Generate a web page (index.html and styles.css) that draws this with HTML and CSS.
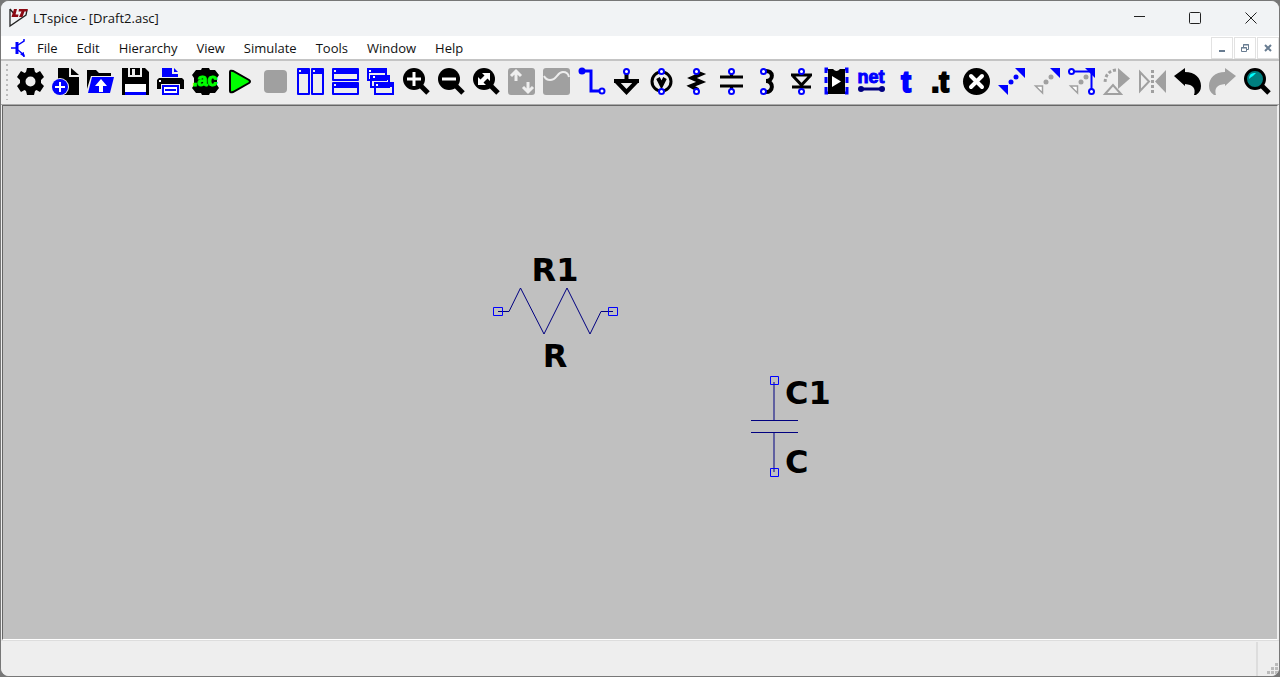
FILE: index.html
```html
<!DOCTYPE html>
<html lang="en">
<head>
<meta charset="utf-8">
<title>LTspice - [Draft2.asc]</title>
<link rel="stylesheet" href="styles.css">
</head>
<body>
<div class="window">
  <header class="titlebar">
    <svg class="logo" width="20" height="20" viewBox="0 0 20 20"><path d="M1 1V18L17 7L18 2M1 1L6 7" fill="none" stroke="#222" stroke-width="1.3"/><path d="M5 1H8L6.500 6.500H9.500L9 9H2.500ZM10 1H19L18 3.500H15.500L13.500 9H10L12.500 3.500H9.500Z" fill="#8b0a14"/></svg>
    <h1 class="title">LTspice - [Draft2.asc]</h1>
    <div class="caption-buttons">
      <button aria-label="Minimize"><svg width="14" height="14" viewBox="0 0 14 14"><path d="M2 5.500H13"/></svg></button>
      <button aria-label="Maximize"><svg width="14" height="14" viewBox="0 0 14 14"><rect x="1.500" y="1.500" width="11" height="11" rx="1"/></svg></button>
      <button aria-label="Close"><svg width="14" height="14" viewBox="0 0 14 14"><path d="M1.500 1.500L12.500 12.500M12.500 1.500L1.500 12.500"/></svg></button>
    </div>
  </header>
  <nav class="menubar">
    <svg class="doc-icon" width="16" height="20" viewBox="0 0 16 20"><path d="M0 10H6M13 1V3L7 7M7 12L13 17V19" fill="none" stroke="#00f" stroke-width="1.500"/><path d="M6 4V16" stroke="#00f" stroke-width="3"/><path d="M9 16L13 14V19Z" fill="#00f"/></svg>
    <div class="menus">
      <button>File</button><button>Edit</button><button>Hierarchy</button><button>View</button><button>Simulate</button><button>Tools</button><button>Window</button><button>Help</button>
    </div>
    <div class="doc-buttons">
      <button aria-label="Minimize document"><svg width="10" height="10" viewBox="0 0 10 10"><path d="M2 8H8" stroke-width="2"/></svg></button>
      <button aria-label="Restore document"><svg width="10" height="10" viewBox="0 0 10 10"><path d="M3.500 4V1.500H8.500V6.500H6M3 2H9M1.500 4.500H6.500V8.500H1.500ZM1 5H7"/></svg></button>
      <button aria-label="Close document"><svg width="10" height="10" viewBox="0 0 10 10"><path d="M2 2L8 8M8 2L2 8" stroke-width="2"/></svg></button>
    </div>
  </nav>
  <div class="toolbar" role="toolbar" aria-label="Tools">
    <span class="gripper"></span>
    <div class="tools">
      <button aria-label="Settings"><svg viewBox="0 0 27 27"><path fill-rule="evenodd" d="M10 0H17L18 4L19.500 5L23 3L27 9L24 12V15L27 18L23 24L19.500 22L18 23L17 27H10L9 23L7.500 22L4 24L0 18L3 15V12L0 9L4 3L7.500 5L9 4ZM13.500 8.500A5 5 0 1 0 13.500 18.500A5 5 0 1 0 13.500 8.500Z"/></svg></button>
      <button aria-label="New schematic"><svg viewBox="0 0 27 27"><path d="M6 0H17V9H27V27H6Z"/><path d="M19 0L27 7H19Z"/><circle cx="8" cy="19" r="9" fill="#eee"/><circle cx="8" cy="19" r="8" fill="#00f"/><path d="M8 14V24M3 19H13" stroke="#fff" stroke-width="2"/></svg></button>
      <button aria-label="Open"><svg viewBox="0 0 27 27"><path d="M0 2H9L12 5H24V8H4L0 21Z"/><path d="M5 9H27L23 25H1Z" fill="#00f"/><path d="M14 11L20 18H16V24H12V18H8Z" fill="#fff"/></svg></button>
      <button aria-label="Save"><svg viewBox="0 0 27 27"><path d="M0 0H6V9H20V0H23L27 4V27H0Z"/><path d="M8 0H18V7H13V1H10V7H8Z"/><path d="M3 16H24V24H3Z" fill="#fff"/><path d="M3 24H24V27H3Z" fill="#00f"/></svg></button>
      <button aria-label="Print"><svg viewBox="0 0 27 27"><path d="M5 0H15V6H21V9H5ZM17 0L21 4H17Z" fill="#00f"/><path d="M2 10H25L27 12V21H23V16H4V21H0V12Z"/><path d="M2 12H4V14H2Z" fill="#fff"/><path d="M6 18H21V26H6Z" fill="#fff" stroke="#00f" stroke-width="2"/><path d="M8 22H19" stroke="#00f" stroke-width="2"/></svg></button>
      <button aria-label="AC analysis"><svg viewBox="0 0 27 27"><path d="M10 0H17L18 2H23L27 7L25 10V17L27 20L23 25H18L17 27H10L9 25H4L0 20L2 17V10L0 7L4 2H9Z"/><text x="13" y="18" text-anchor="middle" font-size="18" fill="#0f0" stroke="#0f0">.ac</text></svg></button>
      <button aria-label="Run"><svg viewBox="0 0 27 27"><path d="M3 4Q3 2 6 3L22 12Q24 13.500 22 15L6 24Q3 25 3 23Z" fill="#0f0" stroke="#000" stroke-width="2"/></svg></button>
      <button aria-label="Stop" disabled><svg viewBox="0 0 27 27"><rect x="2" y="2" width="23" height="23" rx="4" fill="#a0a0a0"/></svg></button>
      <button aria-label="Tile vertically"><svg viewBox="0 0 27 27"><rect width="13" height="27" rx="1" fill="#00f"/><rect x="14" width="13" height="27" rx="1" fill="#00f"/><path d="M2 6H11V25H2ZM16 6H25V25H16ZM2 2H4V4H2ZM16 2H18V4H16Z" fill="#eee"/></svg></button>
      <button aria-label="Tile horizontally"><svg viewBox="0 0 27 27"><rect width="27" height="13" rx="1" fill="#00f"/><rect y="14" width="27" height="13" rx="1" fill="#00f"/><path d="M2 6H25V11H2ZM2 20H25V25H2ZM2 2H4V4H2ZM2 16H4V18H2Z" fill="#eee"/></svg></button>
      <button aria-label="Cascade"><svg viewBox="0 0 27 27"><g fill="#eee" stroke="#00f" stroke-width="2"><path d="M1 1H19V12H1ZM4 8H22V19H4ZM8 15H26V26H8Z"/></g><path d="M1 1H19V5H1ZM4 8H22V12H4ZM8 15H26V19H8Z" fill="#00f"/><path d="M2 2H4V4H2ZM6 8H8V10H6ZM9 16H11V18H9Z" fill="#fff"/></svg></button>
      <button aria-label="Zoom in"><svg viewBox="0 0 27 27"><circle cx="11" cy="11" r="11"/><path d="M17 17L25 25" stroke="#000" stroke-width="5"/><path d="M11 4V18M4 11H18" stroke="#fff" stroke-width="3"/></svg></button>
      <button aria-label="Zoom out"><svg viewBox="0 0 27 27"><circle cx="11" cy="11" r="11"/><path d="M17 17L25 25" stroke="#000" stroke-width="5"/><path d="M4 11H18" stroke="#fff" stroke-width="3"/></svg></button>
      <button aria-label="Zoom to fit"><svg viewBox="0 0 27 27"><circle cx="11" cy="11" r="11"/><path d="M17 17L25 25" stroke="#000" stroke-width="5"/><path d="M9 5H17V13L14.500 10.500L10.500 14.500L13 17H5V9L7.500 11.500L11.500 7.500Z" fill="#fff"/></svg></button>
      <button aria-label="Autorange" disabled><svg viewBox="0 0 27 27"><rect width="27" height="27" rx="3" fill="#a0a0a0"/><path d="M8 13V4M3 8L8 3L13 8M20 14V23M15 19L20 24L25 19" fill="none" stroke="#eee" stroke-width="3"/></svg></button>
      <button aria-label="Plot" disabled><svg viewBox="0 0 27 27"><rect width="27" height="27" rx="3" fill="#a0a0a0"/><path d="M1 8Q3 12 7 12C14 12 14 4 20 4Q25 4 26 9" fill="none" stroke="#eee" stroke-width="2"/></svg></button>
      <button aria-label="Wire"><svg viewBox="0 0 27 27"><path d="M3 3H13V23H21" fill="none" stroke="#00f" stroke-width="3"/><circle cx="4" cy="3" r="3.500" fill="#00f"/><circle cx="24" cy="23" r="2.500" fill="#fff" stroke="#00f" stroke-width="2"/></svg></button>
      <button aria-label="Ground"><svg viewBox="0 0 27 27"><path d="M13.500 5V13M1 13H26M3 13L13.500 24L24 13" fill="none" stroke="#000" stroke-width="4"/><circle class="pin" cx="13.500" cy="3.500" r="2.500"/></svg></button>
      <button aria-label="Voltage"><svg viewBox="0 0 27 27"><circle cx="13.500" cy="13.500" r="9.500" fill="none" stroke="#000" stroke-width="3"/><path d="M10 10L13.500 17L17 10" fill="none" stroke="#000" stroke-width="4"/><circle class="pin" cx="13.500" cy="3.500" r="2.500"/><circle class="pin" cx="13.500" cy="23.500" r="2.500"/></svg></button>
      <button aria-label="Resistor"><svg viewBox="0 0 27 27"><path d="M13 4L18 6L9 10L18 14L8 18L15 22" fill="none" stroke="#000" stroke-width="4"/><circle class="pin" cx="13.500" cy="3.500" r="2.500"/><circle class="pin" cx="13.500" cy="23.500" r="2.500"/></svg></button>
      <button aria-label="Capacitor"><svg viewBox="0 0 27 27"><path d="M2 9H25M2 18H25M13.500 5V9M13.500 18V23" fill="none" stroke="#000" stroke-width="3"/><circle class="pin" cx="13.500" cy="3.500" r="2.500"/><circle class="pin" cx="13.500" cy="23.500" r="2.500"/></svg></button>
      <button aria-label="Inductor"><svg viewBox="0 0 27 27"><path d="M12 3C21 2 21 13 13 13C21 13 21 25 12 24" fill="none" stroke="#000" stroke-width="4"/><circle class="pin" cx="10.500" cy="3.500" r="2.500"/><circle class="pin" cx="10.500" cy="23.500" r="2.500"/></svg></button>
      <button aria-label="Diode"><svg viewBox="0 0 27 27"><path d="M3 7H24M5 8L13.500 17L22 8M4 19H23" fill="none" stroke="#000" stroke-width="3"/><circle class="pin" cx="13.500" cy="3.500" r="2.500"/><circle class="pin" cx="13.500" cy="23.500" r="2.500"/></svg></button>
      <button aria-label="Component"><svg viewBox="0 0 27 27"><path d="M5 1H3V5M3 9V15M3 19V25H5M22 1H24V5M24 9V15M24 19V25H22" fill="none" stroke="#00f" stroke-width="3"/><path d="M5 1H10Q13.500 5 17 1H22V26H5Z"/><path d="M9 8L18 13.500L9 19Z" fill="#fff"/></svg></button>
      <button aria-label="Label net"><svg viewBox="0 0 27 27"><text x="13" y="15" text-anchor="middle" font-size="18" fill="#00f" stroke="#00f">net</text><path d="M3 21H24" stroke="#000080" stroke-width="3"/><circle cx="3" cy="21" r="3" fill="#000080"/><circle cx="24" cy="21" r="3" fill="#000080"/></svg></button>
      <button aria-label="Text"><svg viewBox="0 0 27 27"><text x="13" y="24" text-anchor="middle" font-size="29" fill="#00f" stroke="#00f" stroke-width="2">t</text></svg></button>
      <button aria-label="SPICE directive"><svg viewBox="0 0 27 27"><text x="12" y="24" text-anchor="middle" font-size="29" stroke="#000" stroke-width="2">.t</text></svg></button>
      <button aria-label="Delete"><svg viewBox="0 0 27 27"><circle cx="13.500" cy="13.500" r="13.500"/><path d="M8 8L19 19M19 8L8 19" stroke="#fff" stroke-width="4" stroke-linecap="round"/></svg></button>
      <button aria-label="Duplicate"><svg viewBox="0 0 27 27"><g fill="#00f"><path d="M17 0H27V10ZM0 17H10V27Z"/><circle cx="18" cy="9" r="2.500"/><circle cx="13" cy="14" r="2.500"/></g></svg></button>
      <button aria-label="Move"><svg viewBox="0 0 27 27"><path d="M17 0H27V10Z" fill="#00f"/><path d="M2.500 18H9.500V25Z" fill="#fff" stroke="#a0a0a0" stroke-width="1.500"/><circle cx="18" cy="9" r="2.500" fill="#a0a0a0"/><circle cx="13" cy="14" r="2.500" fill="#a0a0a0"/></svg></button>
      <button aria-label="Stretch"><svg viewBox="0 0 27 27"><path d="M17 0H27V10Z" fill="#00f"/><path d="M2.500 18H9.500V25Z" fill="#fff" stroke="#a0a0a0" stroke-width="1.500"/><circle cx="18" cy="9" r="2.500" fill="#a0a0a0"/><circle cx="13" cy="14" r="2.500" fill="#a0a0a0"/><path d="M4 3.500H23.500V23" fill="none" stroke="#00f" stroke-width="2"/><circle class="pin" cx="3.500" cy="3.500" r="2.500"/><circle class="pin" cx="23.500" cy="23.500" r="2.500"/></svg></button>
      <button aria-label="Rotate" disabled><svg viewBox="0 0 27 27"><path d="M15 0L27 10.500L15 21Z" fill="#a0a0a0"/><path d="M13 2Q2 3 2 16" fill="none" stroke="#a0a0a0" stroke-width="3" stroke-dasharray="3 2"/><path d="M2 26L10 17L18 26Z" fill="#eee" stroke="#a0a0a0" stroke-width="2"/></svg></button>
      <button aria-label="Mirror" disabled><svg viewBox="0 0 27 27"><path d="M1 4V23L10 13.500Z" fill="#eee" stroke="#a0a0a0" stroke-width="2"/><path d="M27 2V25L16 13.500Z" fill="#a0a0a0"/><path d="M13.500 2V26" stroke="#a0a0a0" stroke-width="3" stroke-dasharray="3 2"/></svg></button>
      <button aria-label="Undo"><svg viewBox="0 0 27 27"><path d="M0 8L11 0V4C21 4 27 10 27 18Q27 24 22 27H20Q23 17 11 16V18Z"/></svg></button>
      <button aria-label="Redo" disabled><svg viewBox="0 0 27 27"><path d="M27 8L16 0V4C6 4 0 10 0 18Q0 24 5 27H7Q4 17 16 16V18Z" fill="#a0a0a0"/></svg></button>
      <button aria-label="Search"><svg viewBox="0 0 27 27"><path d="M17 17L25 25" stroke="#000" stroke-width="5"/><circle cx="11" cy="11" r="9.500" fill="#008080" stroke="#000" stroke-width="3"/><path d="M5 11Q5 4 12 5L9 8Q7 9 5 11Z" fill="#0ff"/></svg></button>
    </div>
  </div>
  <main class="sheet">
    <svg class="part resistor" width="126" height="120" viewBox="0 0 126 120">
      <text x="63" y="29" text-anchor="middle">R1</text><text x="63" y="115" text-anchor="middle">R</text>
      <path class="wire" d="M6 59.500H17L28.500 36L52 82L75 36L98 82L109 59.500H121"/>
      <path class="port" d="M1.500 55.500H10.500V63.500H1.500ZM116.500 55.500H125.500V63.500H116.500Z"/>
    </svg>
    <svg class="part capacitor" width="80" height="104" viewBox="0 0 80 104">
      <path class="wire" d="M24 6V44M24 56V96M1 44.500H48M1 56.500H48"/>
      <path class="port" d="M20.500 0.500H28.500V8.500H20.500ZM20.500 92.500H28.500V100.500H20.500Z"/>
      <text x="35" y="28">C1</text><text x="35" y="97">C</text>
    </svg>
  </main>
  <footer class="statusbar"><svg class="size-grip" width="14" height="14" viewBox="0 0 14 14"><path d="M10 1H13V4H10ZM6 5H9V8H6ZM10 5H13V8H10ZM2 9H5V12H2ZM6 9H9V12H6ZM10 9H13V12H10Z"/></svg></footer>
</div>
</body>
</html>
```
FILE: styles.css
```css
* { box-sizing: border-box; }
body { margin: 0; background: #777; font-family: "Open Sans", "Noto Sans", sans-serif; font-size: 13px; color: #111; }
button { margin: 0; padding: 0; border: 0; background: transparent; font: inherit; color: inherit; display: flex; align-items: center; justify-content: center; }
.window { height: 100vh; display: flex; flex-direction: column; border: 1px solid #777; border-radius: 9px; background: #eee; overflow: hidden; }
.titlebar { flex: 0 0 35px; display: flex; align-items: center; background: #f1f3f5; padding: 0 0 2px 8px; }
.logo { margin-right: 4px; flex: none; }
.title { margin: 0; font-size: 13px; font-weight: 400; flex: 1; }
.caption-buttons { display: flex; align-self: stretch; }
.caption-buttons button { width: 56px; }
.caption-buttons svg { fill: none; stroke: #222; stroke-width: 1; }
.menubar { flex: 0 0 23px; display: flex; align-items: center; background: #fff; padding-left: 10px; }
.doc-icon { flex: none; margin-right: 10px; }
.menus { display: flex; gap: 19px; flex: 1; }
.doc-buttons { display: flex; gap: 1px; }
.doc-buttons button { width: 22px; height: 22px; border: 1px solid #e2e2e2; }
.doc-buttons svg { fill: none; stroke: #687c91; stroke-width: 1; }
.toolbar { flex: 0 0 46px; display: flex; align-items: center; border-top: 2px solid #c4c4c4; border-bottom: 1px solid #aaa; background: #eee; padding: 0 4px 2px 5px; }
.gripper { width: 2px; height: 36px; margin-right: 5px; background: repeating-linear-gradient(#bbb 0 2px, #eee 2px 5px); }
.tools { display: flex; flex: 1; justify-content: space-between; }
.tools button { width: 35px; height: 38px; flex: 0 1 35px; }
.tools svg { width: 27px; height: 27px; flex: none; overflow: visible; }
.tools text { font-family: "Liberation Sans", sans-serif; font-weight: 700; }
.pin { fill: #fff; stroke: #00f; stroke-width: 2; }
.sheet { flex: 1; position: relative; background: #c0c0c0; border: 1px solid #666; border-right-color: #eee; border-bottom: 1px solid #fff; margin: 0 1px; overflow: hidden; }
.part { position: absolute; overflow: visible; }
.part text { font: 700 32px "DejaVu Sans", sans-serif; fill: #000; }
.wire { fill: none; stroke: #000080; stroke-width: 1; }
.port { fill: none; stroke: #00f; stroke-width: 1; }
.resistor { left: 489px; top: 146px; }
.capacitor { left: 747px; top: 270px; }
.statusbar { flex: 0 0 36px; display: flex; align-items: flex-end; justify-content: flex-end; border-top: 1px solid #ddd; background: #eee; }
.size-grip { box-sizing: content-box; border-left: 2px solid #ddd; padding: 20px 0 0 7px; fill: #bbb; }
```
